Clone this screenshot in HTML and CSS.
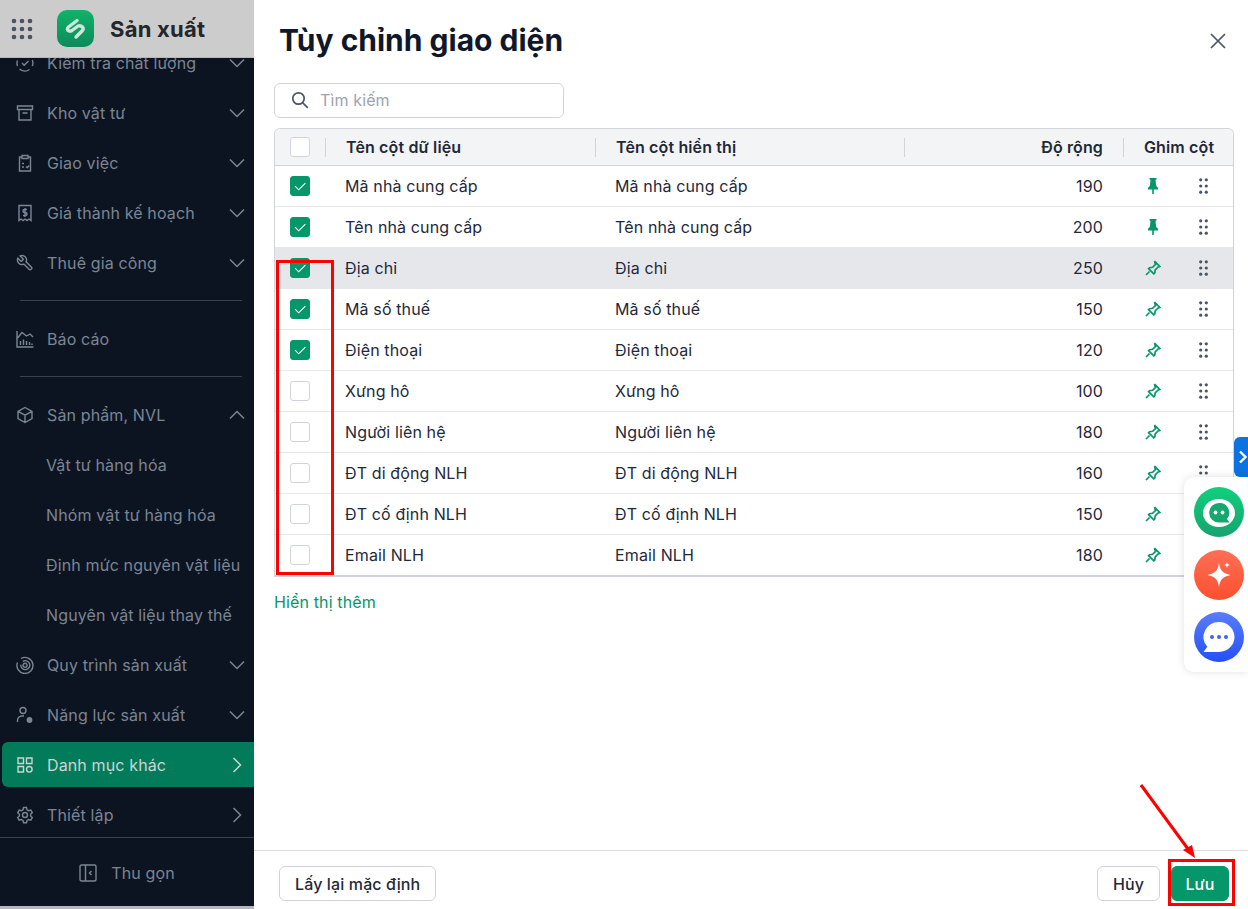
FILE: index.html
```html
<!DOCTYPE html>
<html>
<head>
    <title>Tùy chỉnh giao diện</title>
    <link rel="stylesheet" href="styles.css">
</head>
<body>
    <svg class="defs" width="0" height="0">
        <symbol id="chev-down" viewBox="0 0 16 16"><path d="M1 4.500l7 7 7-7" fill="none" stroke="currentColor" stroke-width="1.500"/></symbol>
        <symbol id="chev-up" viewBox="0 0 16 16"><path d="M1 11.500l7-7 7 7" fill="none" stroke="currentColor" stroke-width="1.500"/></symbol>
        <symbol id="chev-right" viewBox="0 0 16 16"><path d="M4.500 1l7 7-7 7" fill="none" stroke="currentColor" stroke-width="1.500"/></symbol>
        <symbol id="check" viewBox="0 0 20 20"><path d="M4.500 10.200l4 4 7.500-7.500" fill="none" stroke="#fff" stroke-width="1.200"/></symbol>
        <symbol id="pin-solid" viewBox="0 0 10 16"><path d="M1.500 0h7v1.200l-1 .8.700 6 1.800 1.800v1.700H5.800V16H4.200v-4.500H0V9.800L1.800 8l.7-6-1-.8z" fill="#059669"/></symbol>
        <symbol id="pin-line" viewBox="0 0 16 16"><path d="M9.500 1.200l5.300 5.300-1.700.5-2.900 2.900-.4 3-1 1-5.200-5.200 1-1 3-.4 2.900-2.900zM4.500 11.500L1 15" fill="none" stroke="#059669" stroke-width="1.700"/></symbol>
        <symbol id="drag" viewBox="0 0 9 16"><g fill="#4b5563"><circle cx="1.700" cy="1.800" r="1.600"/><circle cx="7.300" cy="1.800" r="1.600"/><circle cx="1.700" cy="8" r="1.600"/><circle cx="7.300" cy="8" r="1.600"/><circle cx="1.700" cy="14.200" r="1.600"/><circle cx="7.300" cy="14.200" r="1.600"/></g></symbol>
    </svg>

    <div class="app">
        <!-- Sidebar -->
        <div class="sidebar">
            <div class="brand">
                <svg class="apps" width="22" height="22" viewBox="0 0 22 22"><g fill="#4b5260"><circle cx="3" cy="3" r="2.300"/><circle cx="11" cy="3" r="2.300"/><circle cx="19" cy="3" r="2.300"/><circle cx="3" cy="11" r="2.300"/><circle cx="11" cy="11" r="2.300"/><circle cx="19" cy="11" r="2.300"/><circle cx="3" cy="19" r="2.300"/><circle cx="11" cy="19" r="2.300"/><circle cx="19" cy="19" r="2.300"/></g></svg>
                <div class="logo">
                    <svg width="37" height="37" viewBox="0 0 37 37"><path d="M20 10.500L11.500 17q-2.500 2.500 .5 4 1.500.5 3-.5l6-4.500q2.500-1 4.500 1 1.500 2-.5 4L19 27" fill="none" stroke="#cfe8dc" stroke-width="3.400" stroke-linecap="round" stroke-linejoin="round"/></svg>
                </div>
                <div class="brand-name">Sản xuất</div>
            </div>

            <div class="menu-wrap">
                <div class="menu">
                    <div class="item">
                        <svg class="ico" viewBox="0 0 18 18"><path d="M13.500 2.500A8 8 0 0 0 3.500 3M1.500 6.500A8 8 0 0 0 1.500 12M3.500 15a8 8 0 0 0 10 .5M16.300 12a8 8 0 0 0 0-6M6 9l2.200 2.200L12.500 7"/></svg>
                        <span class="label">Kiểm tra chất lượng</span>
                        <svg class="arrow"><use href="#chev-down"/></svg>
                    </div>
                    <div class="item">
                        <svg class="ico" viewBox="0 0 18 18"><path d="M1.500 2h15v3.500h-15zM3 5.500V16h12V5.500M6.500 9h5"/></svg>
                        <span class="label">Kho vật tư</span>
                        <svg class="arrow"><use href="#chev-down"/></svg>
                    </div>
                    <div class="item">
                        <svg class="ico" viewBox="0 0 18 18"><path d="M6 3H3.500v14h11V3H12M6 1.500h6v3H6zM6 9.500h2M6 13h2M10 12.500l1.200 1.200 2-2.200"/></svg>
                        <span class="label">Giao việc</span>
                        <svg class="arrow"><use href="#chev-down"/></svg>
                    </div>
                    <div class="item">
                        <svg class="ico" viewBox="0 0 18 18"><path d="M3 1.500h12v15l-2-1.500-2 1.500-2-1.500-2 1.500-2-1.500-2 1.500zM11 5.500H8.500a1.500 1.500 0 0 0 0 3h1a1.500 1.500 0 0 1 0 3H7M9 4v9"/></svg>
                        <span class="label">Giá thành kế hoạch</span>
                        <svg class="arrow"><use href="#chev-down"/></svg>
                    </div>
                    <div class="item">
                        <svg class="ico wrench" viewBox="0 0 24 24"><path transform="matrix(-1 0 0 1 24 0)" d="M14.700 6.300a1 1 0 0 0 0 1.400l1.600 1.600a1 1 0 0 0 1.400 0l3.770-3.770a6 6 0 0 1-7.940 7.940l-6.910 6.910a2.120 2.120 0 0 1-3-3l6.910-6.910a6 6 0 0 1 7.940-7.940l-3.760 3.760z"/></svg>
                        <span class="label">Thuê gia công</span>
                        <svg class="arrow"><use href="#chev-down"/></svg>
                    </div>
                    <div class="divider"></div>
                    <div class="item">
                        <svg class="ico" viewBox="0 0 18 18"><path d="M1 1V17h16.500M4.500 15v-4M7.500 15V9.500M10.500 15v-4M13.500 15v-3M16 15v-1.500M1.500 8l4.500-5.500 4.500 3.500L14 4l3 3"/></svg>
                        <span class="label">Báo cáo</span>
                    </div>
                    <div class="divider"></div>
                    <div class="item">
                        <svg class="ico" viewBox="0 0 18 18"><path d="M9 1.500l7 3.800v7.400l-7 3.800-7-3.800V5.300zM2 5.300l7 3.900 7-3.900M9 9.200v7.300"/></svg>
                        <span class="label">Sản phẩm, NVL</span>
                        <svg class="arrow"><use href="#chev-up"/></svg>
                    </div>
                    <div class="item sub">Vật tư hàng hóa</div>
                    <div class="item sub">Nhóm vật tư hàng hóa</div>
                    <div class="item sub">Định mức nguyên vật liệu</div>
                    <div class="item sub">Nguyên vật liệu thay thế</div>
                    <div class="item">
                        <svg class="ico" viewBox="0 0 18 18"><path d="M5 2.500a8 8 0 1 1-3.500 4M4.800 8.800a4.500 4.500 0 1 0 2-3.400M9 7.300a2 2 0 1 0 .1 0"/></svg>
                        <span class="label">Quy trình sản xuất</span>
                        <svg class="arrow"><use href="#chev-down"/></svg>
                    </div>
                    <div class="item">
                        <svg class="ico" viewBox="0 0 18 18"><circle cx="7" cy="4.500" r="3"/><path d="M1.500 16v-1.500c0-2.500 2-4.500 4.500-4.500h2"/><circle cx="13.500" cy="14" r="2.200" fill="currentColor"/></svg>
                        <span class="label">Năng lực sản xuất</span>
                        <svg class="arrow"><use href="#chev-down"/></svg>
                    </div>
                    <div class="item active">
                        <svg class="ico" viewBox="0 0 18 18"><path d="M2 2h5.500v5.500H2zM10.500 2H16v5.500h-5.500zM2 10.500h5.500V16H2z"/><circle cx="13.300" cy="13.300" r="2.800"/></svg>
                        <span class="label">Danh mục khác</span>
                        <svg class="arrow"><use href="#chev-right"/></svg>
                    </div>
                    <div class="item">
                        <svg class="ico" viewBox="0 0 18 18"><path d="M7.500 1.500h3l.5 2.300 1.600.9 2.200-.7 1.500 2.600-1.700 1.600v1.800l1.700 1.600-1.500 2.600-2.200-.7-1.600.9-.5 2.300h-3L7 14.400l-1.600-.9-2.200.7-1.500-2.600 1.700-1.600V8.200L1.700 6.600l1.500-2.600 2.200.7L7 3.800z"/><circle cx="9" cy="9" r="2.500"/></svg>
                        <span class="label">Thiết lập</span>
                        <svg class="arrow"><use href="#chev-right"/></svg>
                    </div>
                </div>
            </div>

            <div class="collapse">
                <svg class="ico" viewBox="0 0 18 18"><rect x="1" y="1" width="16" height="16" rx="1.500"/><path d="M6.500 1v16M12.500 7l-2 2 2 2"/></svg>
                <span>Thu gọn</span>
            </div>
        </div>

        <!-- Customize panel -->
        <div class="panel">
            <div class="panel-head">
                <h1 class="title">Tùy chỉnh giao diện</h1>
                <svg class="close" width="16" height="16" viewBox="0 0 16 16"><path d="M1 1l14 14M15 1L1 15" fill="none" stroke="#4b5563" stroke-width="1.700"/></svg>
            </div>

            <div class="panel-body">
                <div class="search">
                    <svg width="18" height="18" viewBox="0 0 18 18"><circle cx="7.500" cy="7.500" r="5.700" fill="none" stroke="#4b5563" stroke-width="1.700"/><path d="M11.800 11.800l5 5" stroke="#4b5563" stroke-width="1.700"/></svg>
                    <span>Tìm kiếm</span>
                </div>

                <div class="table">
                    <div class="row head">
                        <div class="cell c-check sep"><span class="box"></span></div>
                        <div class="cell c-name sep">Tên cột dữ liệu</div>
                        <div class="cell c-show sep">Tên cột hiển thị</div>
                        <div class="cell c-width sep">Độ rộng</div>
                        <div class="cell c-pin">Ghim cột</div>
                    </div>
                    <div class="row">
                        <div class="cell c-check"><span class="box on"><svg><use href="#check"/></svg></span></div>
                        <div class="cell c-name">Mã nhà cung cấp</div>
                        <div class="cell c-show">Mã nhà cung cấp</div>
                        <div class="cell c-width">190</div>
                        <div class="cell c-pin"><svg class="pin solid"><use href="#pin-solid"/></svg><svg class="drag"><use href="#drag"/></svg></div>
                    </div>
                    <div class="row">
                        <div class="cell c-check"><span class="box on"><svg><use href="#check"/></svg></span></div>
                        <div class="cell c-name">Tên nhà cung cấp</div>
                        <div class="cell c-show">Tên nhà cung cấp</div>
                        <div class="cell c-width">200</div>
                        <div class="cell c-pin"><svg class="pin solid"><use href="#pin-solid"/></svg><svg class="drag"><use href="#drag"/></svg></div>
                    </div>
                    <div class="row hover">
                        <div class="cell c-check"><span class="box on"><svg><use href="#check"/></svg></span></div>
                        <div class="cell c-name">Địa chỉ</div>
                        <div class="cell c-show">Địa chỉ</div>
                        <div class="cell c-width">250</div>
                        <div class="cell c-pin"><svg class="pin"><use href="#pin-line"/></svg><svg class="drag"><use href="#drag"/></svg></div>
                    </div>
                    <div class="row">
                        <div class="cell c-check"><span class="box on"><svg><use href="#check"/></svg></span></div>
                        <div class="cell c-name">Mã số thuế</div>
                        <div class="cell c-show">Mã số thuế</div>
                        <div class="cell c-width">150</div>
                        <div class="cell c-pin"><svg class="pin"><use href="#pin-line"/></svg><svg class="drag"><use href="#drag"/></svg></div>
                    </div>
                    <div class="row">
                        <div class="cell c-check"><span class="box on"><svg><use href="#check"/></svg></span></div>
                        <div class="cell c-name">Điện thoại</div>
                        <div class="cell c-show">Điện thoại</div>
                        <div class="cell c-width">120</div>
                        <div class="cell c-pin"><svg class="pin"><use href="#pin-line"/></svg><svg class="drag"><use href="#drag"/></svg></div>
                    </div>
                    <div class="row">
                        <div class="cell c-check"><span class="box"></span></div>
                        <div class="cell c-name">Xưng hô</div>
                        <div class="cell c-show">Xưng hô</div>
                        <div class="cell c-width">100</div>
                        <div class="cell c-pin"><svg class="pin"><use href="#pin-line"/></svg><svg class="drag"><use href="#drag"/></svg></div>
                    </div>
                    <div class="row">
                        <div class="cell c-check"><span class="box"></span></div>
                        <div class="cell c-name">Người liên hệ</div>
                        <div class="cell c-show">Người liên hệ</div>
                        <div class="cell c-width">180</div>
                        <div class="cell c-pin"><svg class="pin"><use href="#pin-line"/></svg><svg class="drag"><use href="#drag"/></svg></div>
                    </div>
                    <div class="row">
                        <div class="cell c-check"><span class="box"></span></div>
                        <div class="cell c-name">ĐT di động NLH</div>
                        <div class="cell c-show">ĐT di động NLH</div>
                        <div class="cell c-width">160</div>
                        <div class="cell c-pin"><svg class="pin"><use href="#pin-line"/></svg><svg class="drag"><use href="#drag"/></svg></div>
                    </div>
                    <div class="row">
                        <div class="cell c-check"><span class="box"></span></div>
                        <div class="cell c-name">ĐT cố định NLH</div>
                        <div class="cell c-show">ĐT cố định NLH</div>
                        <div class="cell c-width">150</div>
                        <div class="cell c-pin"><svg class="pin"><use href="#pin-line"/></svg><svg class="drag"><use href="#drag"/></svg></div>
                    </div>
                    <div class="row">
                        <div class="cell c-check"><span class="box"></span></div>
                        <div class="cell c-name">Email NLH</div>
                        <div class="cell c-show">Email NLH</div>
                        <div class="cell c-width">180</div>
                        <div class="cell c-pin"><svg class="pin"><use href="#pin-line"/></svg><svg class="drag"><use href="#drag"/></svg></div>
                    </div>
                </div>

                <a class="more">Hiển thị thêm</a>
            </div>

            <div class="panel-foot">
                <button class="btn">Lấy lại mặc định</button>
                <div class="foot-right">
                    <button class="btn cancel">Hủy</button>
                    <button class="btn primary">Lưu</button>
                </div>
            </div>
        </div>
    </div>

    <!-- Floating support widget -->
    <div class="side-tab"><svg width="10" height="14" viewBox="0 0 10 14"><path d="M2 1.500l5.500 5.500L2 12.500" fill="none" stroke="#fff" stroke-width="2.400"/></svg></div>
    <div class="widget">
        <div class="bubble green">
            <svg width="50" height="50" viewBox="0 0 50 50"><ellipse cx="25" cy="26" rx="16" ry="14" fill="#fff"/><path d="M25 16a9.800 9.800 0 1 0 0 19.600h10.500l-2.500-3.500A9.800 9.800 0 0 0 25 16z" fill="#14a870"/><circle cx="21.500" cy="25.500" r="1.900" fill="#fff"/><circle cx="28.500" cy="25.500" r="1.900" fill="#fff"/></svg>
        </div>
        <div class="bubble red">
            <svg width="50" height="50" viewBox="0 0 50 50"><path d="M25 13c1 7.500 4 10.500 11.500 12-7.500 1.500-10.500 4.500-11.500 12-1-7.500-4-10.500-11.500-12 7.500-1.500 10.500-4.500 11.500-12z" fill="#fff"/><path d="M33 12c.3 1.800 1 2.600 2.800 3-1.800.4-2.500 1.200-2.800 3-.3-1.800-1-2.600-2.800-3 1.800-.4 2.500-1.200 2.800-3z" fill="#fff"/></svg>
        </div>
        <div class="bubble blue">
            <svg width="50" height="50" viewBox="0 0 50 50"><path d="M25 10a15.500 15 0 0 1 0 30H9.500l3.800-5.200A15.500 15 0 0 1 25 10z" fill="#fff"/><circle cx="18" cy="25" r="2" fill="#3b63f3"/><circle cx="25" cy="25" r="2" fill="#3b63f3"/><circle cx="32" cy="25" r="2" fill="#3b63f3"/></svg>
        </div>
    </div>

    <!-- Red annotations drawn on the screenshot -->
    <div class="mark mark-rows"></div>
    <div class="mark mark-save"></div>
    <svg class="mark-arrow" width="70" height="90" viewBox="0 0 70 90"><path d="M1 1l47 64" stroke="#f00" stroke-width="3" fill="none"/><path d="M55 74L43 66l9-5z" fill="#f00"/></svg>
</body>
</html>
```

FILE: styles.css
```css
* {
    box-sizing: border-box;
}
html, body {
    height: 100%;
}
body {
    margin: 0;
    font-family: Inter, "Noto Sans", sans-serif;
    font-size: 16px;
    letter-spacing: 0.13px;
    color: #1f2937;
    background-color: #fff;
    overflow: hidden;
    position: relative;
}
.defs {
    position: absolute;
}
.app {
    display: flex;
    height: 909px;
}

/* Sidebar */
.sidebar {
    width: 254px;
    flex-shrink: 0;
    height: 909px;
    display: flex;
    flex-direction: column;
    background-color: #0d1421;
    color: #7b8594;
    border-bottom: 3px solid #b4b6b9;
}
.brand {
    height: 58px;
    flex-shrink: 0;
    display: flex;
    align-items: center;
    padding-left: 11px;
    background-color: #cccccc;
    border-bottom: 1px solid #b5b7ba;
}
.apps {
    margin-right: 24px;
}
.logo {
    width: 37px;
    height: 37px;
    margin-right: 16px;
    border-radius: 10px;
    background: linear-gradient(#10b368, #0d8a5c);
}
.logo svg {
    display: block;
}
.brand-name {
    font-size: 22px;
    font-weight: 700;
    letter-spacing: 0.25px;
    color: #23262b;
}
.menu-wrap {
    flex: 1;
    overflow: hidden;
}
.menu {
    margin-top: -20px;
    padding-left: 2px;
}
.item {
    height: 50px;
    display: flex;
    align-items: center;
    padding-left: 14px;
    padding-right: 9px;
}
.item.sub {
    padding-left: 44px;
}
.item.active {
    height: 45px;
    margin: 2px 0 3px;
    border-radius: 6px 0 0 6px;
    background-color: #027b5b;
    color: #cbd5d1;
}
.ico {
    width: 18px;
    height: 18px;
    flex-shrink: 0;
    margin-right: 13px;
    fill: none;
    stroke: currentColor;
    stroke-width: 1.4;
}
.ico.wrench {
    stroke-width: 1.9;
}
.label {
    flex: 1;
}
.arrow {
    width: 16px;
    height: 16px;
}
.divider {
    height: 1px;
    margin: 12px 12px 13px 18px;
    background-color: #3a404c;
}
.collapse {
    height: 69px;
    flex-shrink: 0;
    display: flex;
    align-items: center;
    justify-content: center;
    padding-top: 2px;
    border-top: 1px solid #3a404c;
}
.collapse .ico {
    margin-right: 14px;
}

/* Panel */
.panel {
    flex: 1;
    min-width: 0;
    display: flex;
    flex-direction: column;
}
.panel-head {
    height: 83px;
    flex-shrink: 0;
    display: flex;
    justify-content: space-between;
    align-items: flex-start;
    padding: 22px 22px 0 25px;
}
.title {
    margin: 0;
    font-size: 30px;
    line-height: 36px;
    font-weight: 700;
    letter-spacing: 0;
    color: #0f172a;
}
.close {
    margin-top: 11px;
}
.panel-body {
    flex: 1;
    padding: 0 14px 0 20px;
}
.search {
    width: 290px;
    height: 35px;
    display: flex;
    align-items: center;
    gap: 11px;
    padding-left: 16px;
    padding-bottom: 1px;
    margin-bottom: 10px;
    border: 1px solid #d1d5db;
    border-radius: 6px;
    color: #9ca3af;
}
.table {
    border: 1px solid #d1d5db;
    border-radius: 6px 6px 0 0;
    border-bottom-width: 2px;
    color: #1e293b;
}
.row {
    display: flex;
    height: 41px;
    border-bottom: 1px solid #e5e7eb;
}
.row:last-child {
    height: 40px;
    border-bottom: none;
}
.row.head {
    height: 37px;
    background-color: #f3f4f6;
    border-bottom: 1px solid #d1d5db;
    border-radius: 6px 6px 0 0;
    font-weight: 600;
    color: #1f2937;
}
.row.hover {
    background-color: #e5e7eb;
}
.cell {
    display: flex;
    align-items: center;
    position: relative;
}
.sep::after {
    content: "";
    position: absolute;
    right: 0;
    top: 9px;
    height: 19px;
    width: 1px;
    background-color: #d1d5db;
}
.c-check {
    width: 51px;
    padding-left: 15px;
}
.c-name {
    width: 270px;
    padding-left: 19px;
}
.c-show {
    width: 309px;
    padding-left: 19px;
}
.head .c-name,
.head .c-show {
    padding-left: 20px;
}
.c-width {
    width: 219px;
    justify-content: flex-end;
    padding-right: 21px;
}
.c-pin {
    flex: 1;
    padding-left: 20px;
}
.box {
    width: 20px;
    height: 20px;
    display: block;
    background-color: #fff;
    border: 1px solid #d1d5db;
    border-radius: 3px;
}
.box.on {
    background-color: #059669;
    border-color: #059669;
}
.box svg {
    display: block;
    width: 18px;
    height: 18px;
}
.pin {
    width: 16px;
    height: 16px;
    margin-left: 1px;
    margin-right: 38px;
}
.pin.solid {
    width: 10px;
    height: 16px;
    margin-left: 4px;
    margin-right: 41px;
}
.drag {
    width: 9px;
    height: 16px;
}
.more {
    display: block;
    margin-top: 15px;
    color: #059669;
}
.panel-foot {
    height: 59px;
    flex-shrink: 0;
    display: flex;
    justify-content: space-between;
    align-items: flex-start;
    padding: 15px 19px 0 25px;
    border-top: 1px solid #d9dde3;
}
.foot-right {
    display: flex;
    gap: 11px;
}
.btn {
    height: 35px;
    padding: 0 15px;
    font: inherit;
    font-weight: 500;
    letter-spacing: inherit;
    color: #1f2937;
    background-color: #fff;
    border: 1px solid #d1d5db;
    border-radius: 6px;
}
.btn.cancel {
    width: 63px;
    padding: 0;
}
.btn.primary {
    width: 58px;
    padding: 0;
    color: #fff;
    background-color: #059669;
    border-color: #059669;
}

/* Floating widget */
.side-tab {
    position: absolute;
    left: 1234px;
    top: 437px;
    width: 14px;
    height: 40px;
    display: flex;
    align-items: center;
    padding-left: 4px;
    background-color: #0b72e0;
    border-radius: 6px 0 0 6px;
}
.widget {
    position: absolute;
    left: 1184px;
    top: 477px;
    width: 64px;
    height: 195px;
    padding: 10px 0 0 10px;
    display: flex;
    flex-direction: column;
    gap: 12.500px;
    background-color: #fff;
    border-radius: 10px 0 0 10px;
    box-shadow: 0 0 8px rgba(0,0,0,0.12);
}
.bubble {
    width: 50px;
    height: 50px;
    border-radius: 50%;
}
.bubble svg {
    display: block;
}
.green {
    background: linear-gradient(#10d07c, #16a36f);
}
.red {
    background: linear-gradient(#ff6f55, #fb5030);
}
.blue {
    background: linear-gradient(#5a7dfb, #2450f5);
}

/* Annotations */
.mark {
    position: absolute;
    border: 3px solid #f00;
}
.mark-rows {
    left: 276px;
    top: 260px;
    width: 58px;
    height: 315px;
}
.mark-save {
    left: 1168px;
    top: 859px;
    width: 67px;
    height: 47px;
}
.mark-arrow {
    position: absolute;
    left: 1140px;
    top: 784px;
}
```
